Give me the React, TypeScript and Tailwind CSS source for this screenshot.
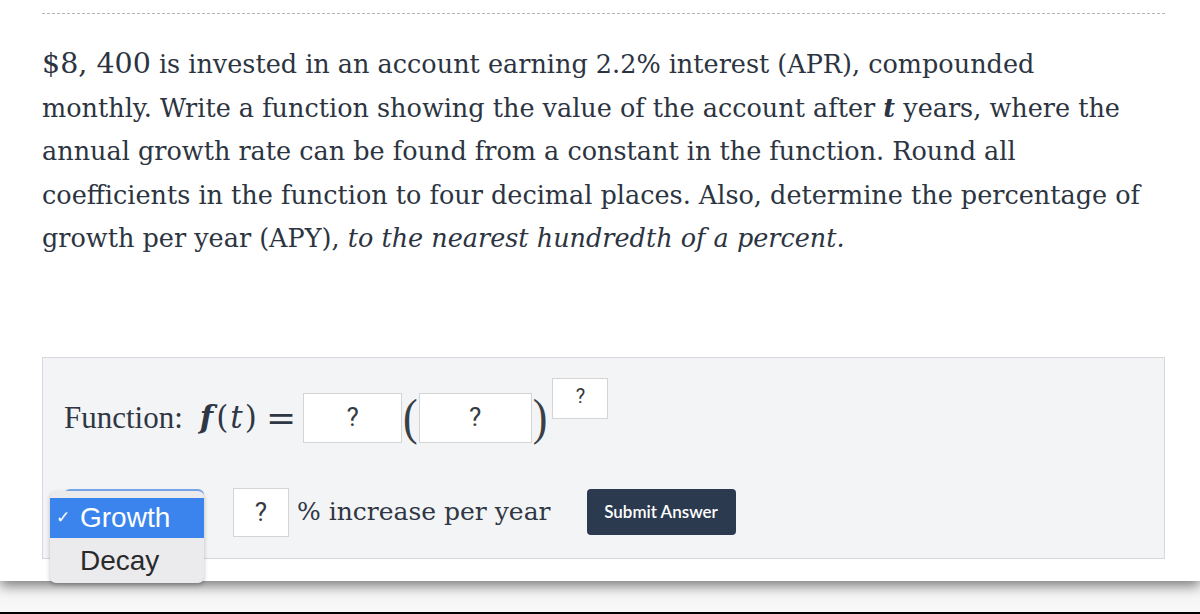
import React from "react";

const serif = { fontFamily: '"DejaVu Serif", Georgia, serif' };

function QBox({ className }: { className: string }) {
  return (
    <div
      className={`flex items-center justify-center bg-white border border-[#d4d4d4] text-[#353a42] ${className}`}
      style={{ fontFamily: 'Roboto, "Noto Sans", sans-serif' }}
    >
      ?
    </div>
  );
}

export default function App() {
  return (
    <div className="w-[1200px] h-[614px] bg-black overflow-hidden">
      <div className="h-[612px] bg-[#f7f7f7] overflow-hidden">
        <div className="h-[581px] bg-white shadow-[0_5px_12px_rgba(0,0,0,0.5)] px-[42px] pt-[13px] relative">
          <div className="w-[1123px] border-t-[1.5px] border-dashed border-[#b5b5b5]" />
          <p
            className="mt-[29px] text-[25.5px] leading-[43.5px] text-[#2c3441] whitespace-nowrap"
            style={serif}
          >
            <span className="text-[28.5px] leading-none">$8,&nbsp;400</span> is invested in an account earning 2.2% interest (APR), compounded
            <br />
            monthly. Write a function showing the value of the account after{" "}
            <span className="italic font-bold leading-none">t</span> years, where the
            <br />
            annual growth rate can be found from a constant in the function. Round all
            <br />
            coefficients in the function to four decimal places. Also, determine the percentage of
            <br />
            growth per year (APY), <span className="italic">to the nearest hundredth of a percent.</span>
          </p>

          <div className="mt-[96px] w-[1123px] h-[202px] bg-[#f3f4f6] border border-[#d6d8db] px-[21px] pt-[35px]">
            <div className="flex items-center h-[50px] text-[#2f3744]">
              <span className="text-[31px] leading-none" style={{ fontFamily: '"Liberation Serif", serif' }}>Function:</span>
              <span className="text-[31px] leading-none ml-[17px] flex items-center" style={serif}>
                <span className="italic font-bold mr-[3px]">f</span>
                <span>(</span>
                <span className="italic mx-[2px]">t</span>
                <span>)</span>
              </span>
              <span className="text-[36px] leading-none ml-[9px] mr-[7px]" style={serif}>=</span>
              <QBox className="w-[99px] h-[50px] text-[26px]" />
              <span className="text-[44px] leading-none font-light scale-y-[1.15] mx-[1px] text-[#3a3f47]" style={{ fontFamily: '"Liberation Serif", serif' }}>(</span>
              <QBox className="w-[113px] h-[50px] text-[26px]" />
              <span className="text-[44px] leading-none font-light scale-y-[1.15] mx-[1px] text-[#3a3f47]" style={{ fontFamily: '"Liberation Serif", serif' }}>)</span>
              <QBox className="self-start mt-[-15px] ml-[4px] w-[56px] h-[41px] text-[20px] pb-[4px]" />
            </div>

            <div className="flex items-center h-[49px] mt-[45px]">
              <div className="relative w-[140px] h-[46px]">
                <div className="absolute inset-0 rounded-[6px] border-t-[3px] border-[#7aa7ec] bg-[#e4e7ec]" />
                <div
                  className="absolute left-[-14px] top-[2px] w-[154px] h-[92px] rounded-[6px] bg-[#ebebee] shadow-[0_2px_4px_rgba(0,0,0,0.25)] pt-[7px] overflow-hidden z-10"
                  style={{ fontFamily: '"Liberation Sans", Arial, sans-serif' }}
                >
                  <div className="h-[40px] bg-[#3b84ee] text-white flex items-center text-[28px]">
                    <span className="w-[30px] text-[17px] pl-[6px]">✓</span>
                    <span>Growth</span>
                  </div>
                  <div className="h-[45px] flex items-center pl-[30px] text-[28px] text-[#2a2a2a]">Decay</div>
                </div>
              </div>
              <QBox className="ml-[29px] w-[56px] h-[49px] text-[26px]" />
              <span className="ml-[8px] text-[25px] text-[#2f3744]" style={serif}>% increase per year</span>
              <button
                className="ml-[36px] w-[149px] h-[46px] rounded-[4px] bg-[#2b3a4f] text-white text-[17px] font-semibold"
                style={{ fontFamily: 'Lato, "Open Sans", sans-serif' }}
              >
                Submit Answer
              </button>
            </div>
          </div>
        </div>
      </div>
    </div>
  );
}
